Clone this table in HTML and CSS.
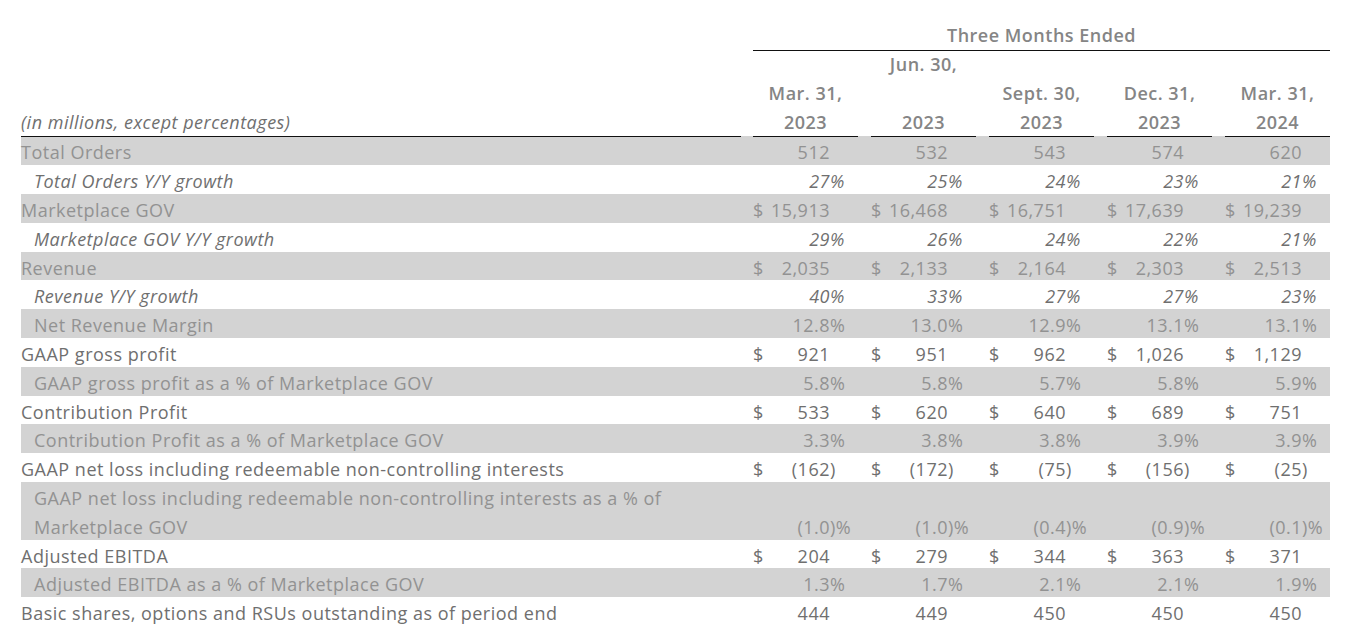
FILE: index.html
```html
<!DOCTYPE html>
<html>
<head>
<meta charset="utf-8">
<link rel="stylesheet" href="styles.css">
</head>
<body>
<div class="table">
  <div class="hrow h1">
    <div class="lab"></div>
    <div class="span">Three Months Ended</div>
  </div>
  <div class="hrow">
    <div class="lab"></div>
    <div class="hc"></div><div class="hc">Jun. 30,</div><div class="hc"></div><div class="hc"></div><div class="hc"></div>
  </div>
  <div class="hrow">
    <div class="lab"></div>
    <div class="hc">Mar. 31,</div><div class="hc"></div><div class="hc">Sept. 30,</div><div class="hc">Dec. 31,</div><div class="hc">Mar. 31,</div>
  </div>
  <div class="hrow yr">
    <div class="lab unit">(in millions, except percentages)</div>
    <div class="hc">2023</div><div class="hc">2023</div><div class="hc">2023</div><div class="hc">2023</div><div class="hc">2024</div>
  </div>

  <div class="row shade">
    <div class="lab">Total Orders</div>
    <div class="c"><span class="d"></span><span class="n">512</span><span class="s"></span></div>
    <div class="c"><span class="d"></span><span class="n">532</span><span class="s"></span></div>
    <div class="c"><span class="d"></span><span class="n">543</span><span class="s"></span></div>
    <div class="c"><span class="d"></span><span class="n">574</span><span class="s"></span></div>
    <div class="c"><span class="d"></span><span class="n">620</span><span class="s"></span></div>
  </div>
  <div class="row it">
    <div class="lab sub">Total Orders Y/Y growth</div>
    <div class="c"><span class="d"></span><span class="n">27</span><span class="s">%</span></div>
    <div class="c"><span class="d"></span><span class="n">25</span><span class="s">%</span></div>
    <div class="c"><span class="d"></span><span class="n">24</span><span class="s">%</span></div>
    <div class="c"><span class="d"></span><span class="n">23</span><span class="s">%</span></div>
    <div class="c"><span class="d"></span><span class="n">21</span><span class="s">%</span></div>
  </div>
  <div class="row shade">
    <div class="lab">Marketplace GOV</div>
    <div class="c"><span class="d">$</span><span class="n">15,913</span><span class="s"></span></div>
    <div class="c"><span class="d">$</span><span class="n">16,468</span><span class="s"></span></div>
    <div class="c"><span class="d">$</span><span class="n">16,751</span><span class="s"></span></div>
    <div class="c"><span class="d">$</span><span class="n">17,639</span><span class="s"></span></div>
    <div class="c"><span class="d">$</span><span class="n">19,239</span><span class="s"></span></div>
  </div>
  <div class="row it">
    <div class="lab sub">Marketplace GOV Y/Y growth</div>
    <div class="c"><span class="d"></span><span class="n">29</span><span class="s">%</span></div>
    <div class="c"><span class="d"></span><span class="n">26</span><span class="s">%</span></div>
    <div class="c"><span class="d"></span><span class="n">24</span><span class="s">%</span></div>
    <div class="c"><span class="d"></span><span class="n">22</span><span class="s">%</span></div>
    <div class="c"><span class="d"></span><span class="n">21</span><span class="s">%</span></div>
  </div>
  <div class="row shade">
    <div class="lab">Revenue</div>
    <div class="c"><span class="d">$</span><span class="n">2,035</span><span class="s"></span></div>
    <div class="c"><span class="d">$</span><span class="n">2,133</span><span class="s"></span></div>
    <div class="c"><span class="d">$</span><span class="n">2,164</span><span class="s"></span></div>
    <div class="c"><span class="d">$</span><span class="n">2,303</span><span class="s"></span></div>
    <div class="c"><span class="d">$</span><span class="n">2,513</span><span class="s"></span></div>
  </div>
  <div class="row it">
    <div class="lab sub">Revenue Y/Y growth</div>
    <div class="c"><span class="d"></span><span class="n">40</span><span class="s">%</span></div>
    <div class="c"><span class="d"></span><span class="n">33</span><span class="s">%</span></div>
    <div class="c"><span class="d"></span><span class="n">27</span><span class="s">%</span></div>
    <div class="c"><span class="d"></span><span class="n">27</span><span class="s">%</span></div>
    <div class="c"><span class="d"></span><span class="n">23</span><span class="s">%</span></div>
  </div>
  <div class="row shade">
    <div class="lab sub">Net Revenue Margin</div>
    <div class="c"><span class="d"></span><span class="n">12.8</span><span class="s">%</span></div>
    <div class="c"><span class="d"></span><span class="n">13.0</span><span class="s">%</span></div>
    <div class="c"><span class="d"></span><span class="n">12.9</span><span class="s">%</span></div>
    <div class="c"><span class="d"></span><span class="n">13.1</span><span class="s">%</span></div>
    <div class="c"><span class="d"></span><span class="n">13.1</span><span class="s">%</span></div>
  </div>
  <div class="row">
    <div class="lab">GAAP gross profit</div>
    <div class="c"><span class="d">$</span><span class="n">921</span><span class="s"></span></div>
    <div class="c"><span class="d">$</span><span class="n">951</span><span class="s"></span></div>
    <div class="c"><span class="d">$</span><span class="n">962</span><span class="s"></span></div>
    <div class="c"><span class="d">$</span><span class="n">1,026</span><span class="s"></span></div>
    <div class="c"><span class="d">$</span><span class="n">1,129</span><span class="s"></span></div>
  </div>
  <div class="row shade">
    <div class="lab sub">GAAP gross profit as a % of Marketplace GOV</div>
    <div class="c"><span class="d"></span><span class="n">5.8</span><span class="s">%</span></div>
    <div class="c"><span class="d"></span><span class="n">5.8</span><span class="s">%</span></div>
    <div class="c"><span class="d"></span><span class="n">5.7</span><span class="s">%</span></div>
    <div class="c"><span class="d"></span><span class="n">5.8</span><span class="s">%</span></div>
    <div class="c"><span class="d"></span><span class="n">5.9</span><span class="s">%</span></div>
  </div>
  <div class="row">
    <div class="lab">Contribution Profit</div>
    <div class="c"><span class="d">$</span><span class="n">533</span><span class="s"></span></div>
    <div class="c"><span class="d">$</span><span class="n">620</span><span class="s"></span></div>
    <div class="c"><span class="d">$</span><span class="n">640</span><span class="s"></span></div>
    <div class="c"><span class="d">$</span><span class="n">689</span><span class="s"></span></div>
    <div class="c"><span class="d">$</span><span class="n">751</span><span class="s"></span></div>
  </div>
  <div class="row shade">
    <div class="lab sub">Contribution Profit as a % of Marketplace GOV</div>
    <div class="c"><span class="d"></span><span class="n">3.3</span><span class="s">%</span></div>
    <div class="c"><span class="d"></span><span class="n">3.8</span><span class="s">%</span></div>
    <div class="c"><span class="d"></span><span class="n">3.8</span><span class="s">%</span></div>
    <div class="c"><span class="d"></span><span class="n">3.9</span><span class="s">%</span></div>
    <div class="c"><span class="d"></span><span class="n">3.9</span><span class="s">%</span></div>
  </div>
  <div class="row">
    <div class="lab">GAAP net loss including redeemable non-controlling interests</div>
    <div class="c"><span class="d">$</span><span class="n">(162</span><span class="s">)</span></div>
    <div class="c"><span class="d">$</span><span class="n">(172</span><span class="s">)</span></div>
    <div class="c"><span class="d">$</span><span class="n">(75</span><span class="s">)</span></div>
    <div class="c"><span class="d">$</span><span class="n">(156</span><span class="s">)</span></div>
    <div class="c"><span class="d">$</span><span class="n">(25</span><span class="s">)</span></div>
  </div>
  <div class="row shade tall">
    <div class="lab sub">GAAP net loss including redeemable non-controlling interests as a % of<br>Marketplace GOV</div>
    <div class="c"><span class="d"></span><span class="n">(1.0</span><span class="s">)%</span></div>
    <div class="c"><span class="d"></span><span class="n">(1.0</span><span class="s">)%</span></div>
    <div class="c"><span class="d"></span><span class="n">(0.4</span><span class="s">)%</span></div>
    <div class="c"><span class="d"></span><span class="n">(0.9</span><span class="s">)%</span></div>
    <div class="c"><span class="d"></span><span class="n">(0.1</span><span class="s">)%</span></div>
  </div>
  <div class="row">
    <div class="lab">Adjusted EBITDA</div>
    <div class="c"><span class="d">$</span><span class="n">204</span><span class="s"></span></div>
    <div class="c"><span class="d">$</span><span class="n">279</span><span class="s"></span></div>
    <div class="c"><span class="d">$</span><span class="n">344</span><span class="s"></span></div>
    <div class="c"><span class="d">$</span><span class="n">363</span><span class="s"></span></div>
    <div class="c"><span class="d">$</span><span class="n">371</span><span class="s"></span></div>
  </div>
  <div class="row shade">
    <div class="lab sub">Adjusted EBITDA as a % of Marketplace GOV</div>
    <div class="c"><span class="d"></span><span class="n">1.3</span><span class="s">%</span></div>
    <div class="c"><span class="d"></span><span class="n">1.7</span><span class="s">%</span></div>
    <div class="c"><span class="d"></span><span class="n">2.1</span><span class="s">%</span></div>
    <div class="c"><span class="d"></span><span class="n">2.1</span><span class="s">%</span></div>
    <div class="c"><span class="d"></span><span class="n">1.9</span><span class="s">%</span></div>
  </div>
  <div class="row">
    <div class="lab">Basic shares, options and RSUs outstanding as of period end</div>
    <div class="c"><span class="d"></span><span class="n">444</span><span class="s"></span></div>
    <div class="c"><span class="d"></span><span class="n">449</span><span class="s"></span></div>
    <div class="c"><span class="d"></span><span class="n">450</span><span class="s"></span></div>
    <div class="c"><span class="d"></span><span class="n">450</span><span class="s"></span></div>
    <div class="c"><span class="d"></span><span class="n">450</span><span class="s"></span></div>
  </div>
</div>
</body>
</html>
```
FILE: styles.css
```css
html, body {
  margin: 0;
  padding: 0;
  background: #ffffff;
}
body {
  font-family: "Open Sans", Lato, sans-serif;
  font-size: 18px;
  letter-spacing: 0.5px;
  color: #6f6f6f;
  padding: 21px 0 0 21px;
}
.table {
  width: 1309px;
}
.hrow, .row {
  display: grid;
  grid-template-columns: 719px repeat(5, 105px);
  column-gap: 13px;
  height: 28.8px;
  line-height: 28.8px;
}
.row > * {
  padding-top: 2px;
}
.hrow {
  font-weight: 600;
  color: #858585;
}
.h1 {
  height: 29px;
  line-height: 29px;
}
.h1 .span {
  grid-column: 2 / 7;
  text-align: center;
  border-bottom: 1.5px solid #111;
}
.hc {
  text-align: center;
}
.yr .hc, .yr .lab {
  border-bottom: 1.5px solid #111;
}
.yr .lab {
  margin-right: -1px;
}
.unit {
  font-weight: 400;
  font-style: italic;
  color: #6f6f6f;
}
.row.shade {
  background: #d3d3d3;
  color: #929292;
}
.row.tall {
  height: 57.6px;
}
.lab {
  white-space: nowrap;
}
.lab.sub {
  padding-left: 13px;
}
.it {
  font-style: italic;
}
.c {
  display: flex;
  align-self: end;
  height: 28.8px;
}
.c .d {
  flex: none;
}
.c .n {
  flex: 1;
  text-align: right;
}
.c .s {
  flex: none;
  width: 28px;
  text-align: left;
}
```
